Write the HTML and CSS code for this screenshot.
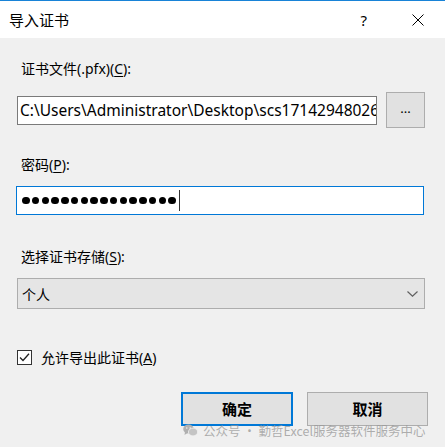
FILE: index.html
```html
<!DOCTYPE html>
<html lang="zh-CN">
<head>
<meta charset="utf-8">
<title>导入证书</title>
<link rel="stylesheet" href="styles.css">
</head>
<body>
<div class="window">
  <div class="titlebar">
    <span class="title">导入证书</span>
    <span class="help">?</span>
    <svg class="close" width="12" height="12" viewBox="0 0 12 12"><path d="M0.5 0.5 L11.5 11.5 M11.5 0.5 L0.5 11.5" stroke="#000" stroke-width="1"/></svg>
  </div>
  <div class="content">
    <div class="label l1">证书文件(.pfx)(<u>C</u>):</div>
    <div class="filerow">
      <div class="field path">C:\Users\Administrator\Desktop\scs1714294802609</div>
      <div class="btn browse">...</div>
    </div>
    <div class="label l2">密码(<u>P</u>):</div>
    <div class="field pwd">
      <span class="dot"></span><span class="dot"></span><span class="dot"></span><span class="dot"></span>
      <span class="dot"></span><span class="dot"></span><span class="dot"></span><span class="dot"></span>
      <span class="dot"></span><span class="dot"></span><span class="dot"></span><span class="dot"></span>
      <span class="dot"></span><span class="dot"></span><span class="dot"></span><span class="dot"></span>
      <span class="caret"></span>
    </div>
    <div class="label l3">选择证书存储(<u>S</u>):</div>
    <div class="select">
      <span>个人</span>
      <svg class="chev" width="11" height="6" viewBox="0 0 11 6"><path d="M0.5 0.5 L5.5 5.2 L10.5 0.5" fill="none" stroke="#606060" stroke-width="1.2"/></svg>
    </div>
    <div class="check">
      <svg class="box" width="15" height="15" viewBox="0 0 15 15"><rect x="0.5" y="0.5" width="14" height="14" fill="#fff" stroke="#333"/><path d="M3 7.5 L6 10.5 L12 3.8" fill="none" stroke="#222" stroke-width="1.3"/></svg>
      <span>允许导出此证书(<u>A</u>)</span>
    </div>
    <div class="buttons">
      <div class="btn ok">确定</div>
      <div class="btn cancel">取消</div>
    </div>
  </div>
  <div class="watermark">
    <svg width="15" height="13" viewBox="0 0 15 13"><ellipse cx="5.5" cy="5" rx="5.3" ry="4.5" fill="#b0b0b0"/><path d="M2 8 L1.5 11 L4.5 9 Z" fill="#b0b0b0"/><ellipse cx="10" cy="8" rx="4.6" ry="3.9" fill="#c4c4c4" stroke="#f0f0f0" stroke-width="0.8"/><circle cx="3.8" cy="4" r="0.8" fill="#f0f0f0"/><circle cx="7.2" cy="4" r="0.8" fill="#f0f0f0"/></svg>
    <span>公众号 · 勤哲Excel服务器软件服务中心</span>
  </div>
</div>
</body>
</html>
```
FILE: styles.css
```css
* { box-sizing: border-box; }
html, body { margin: 0; padding: 0; }
body {
  font-family: "Noto Sans", "Noto Sans CJK SC", sans-serif;
  font-size: 14px;
  color: #000;
  background: #f0f0f0;
}
.window {
  position: relative;
  width: 445px;
  height: 447px;
  background: #f0f0f0;
  border-top: 1px solid #1883d7;
  overflow: hidden;
}
.titlebar {
  height: 37px;
  background: #fff;
  display: flex;
  align-items: center;
  padding-left: 9px;
}
.title {
  font-family: "Noto Sans CJK SC", sans-serif;
  font-size: 15px;
  flex: 1;
}
.help {
  font-family: "Noto Sans", sans-serif;
  font-size: 15px;
  margin-right: 45px;
}
.close { margin-right: 21px; }
.content {
  padding: 0 20px 0 17px;
}
.label {
  line-height: 20px;
  height: 20px;
  padding-left: 4px;
  font-family: "Noto Sans", "Noto Sans CJK SC", sans-serif;
  font-size: 14px;
}
.label u { text-underline-offset: 2px; }
.l1 { margin-top: 21px; }
.filerow {
  margin-top: 13px;
  display: flex;
  align-items: center;
  height: 36px;
}
.field {
  background: #fff;
  border: 1px solid #7a7a7a;
  height: 29px;
  display: flex;
  align-items: center;
  overflow: hidden;
  white-space: nowrap;
}
.path {
  width: 361px;
  padding-left: 2px;
  font-size: 15.5px;
}
.btn {
  background: #e1e1e1;
  border: 1px solid #adadad;
  display: flex;
  align-items: center;
  justify-content: center;
}
.browse {
  width: 39px;
  height: 36px;
  margin-left: 9px;
  font-size: 13px;
  padding-bottom: 4px;
}
.l2 { margin-top: 27px; }
.pwd {
  margin-top: 11px;
  width: 408px;
  border-color: #0078d7;
  padding-left: 5px;
  margin-left: -1px;
}
.dot {
  display: inline-block;
  width: 7.5px;
  height: 7.5px;
  border-radius: 50%;
  background: #000;
  margin-right: 2.25px;
}
.caret {
  display: inline-block;
  width: 1px;
  height: 21px;
  background: #333;
  margin-left: 1px;
}
.l3 { margin-top: 32px; }
.select {
  margin-top: 11px;
  width: 408px;
  height: 31px;
  background: #e5e5e5;
  border: 1px solid #adadad;
  display: flex;
  align-items: center;
  justify-content: space-between;
  padding: 0 6px 0 4px;
  font-family: "Noto Sans CJK SC", sans-serif;
  font-size: 14px;
}
.check {
  margin-top: 38px;
  height: 20px;
  display: flex;
  align-items: center;
  gap: 9px;
  font-size: 14px;
}
.buttons {
  margin-top: 25px;
  display: flex;
  justify-content: flex-end;
  gap: 14px;
  margin-right: -3px;
}
.ok, .cancel {
  height: 34px;
  font-family: "Noto Sans CJK SC", sans-serif;
  font-size: 15px;
  font-weight: 700;
  padding-bottom: 2px;
}
.ok {
  width: 112px;
  border: 2px solid #0078d7;
}
.cancel { width: 121px; }
.watermark {
  position: absolute;
  left: 183px;
  top: 420px;
  display: flex;
  align-items: center;
  gap: 5px;
  color: rgba(150, 150, 150, 0.75);
  font-family: "Noto Sans CJK SC", sans-serif;
  font-size: 12.5px;
  white-space: nowrap;
}
```
